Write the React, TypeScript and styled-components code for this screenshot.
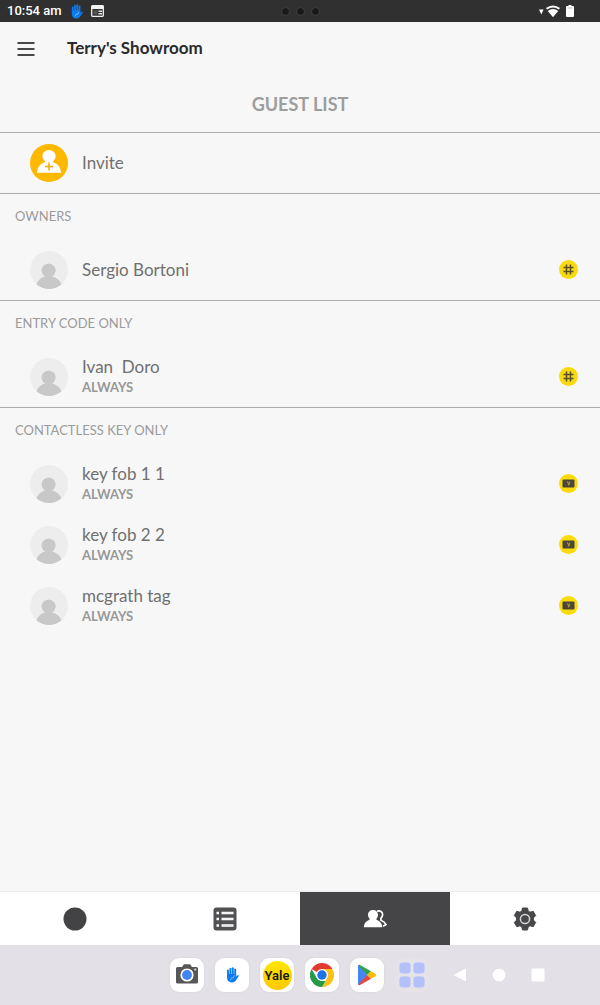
import React from "react";
import styled, { createGlobalStyle } from "styled-components";

const GlobalStyle = createGlobalStyle`
  *, *::before, *::after { box-sizing: border-box; }
  body { margin: 0; background: #f7f7f7; font-family: Lato, "Open Sans", sans-serif; }
  button { font: inherit; color: inherit; border: 0; padding: 0; margin: 0; background: none; cursor: pointer; }
  h1, h2, p, ul { margin: 0; padding: 0; }
  ul { list-style: none; }
  svg { display: block; flex: none; }
`;

const Screen = styled.div`
  min-height: 100vh;
  display: flex;
  flex-direction: column;
`;

const StatusBar = styled.div`
  display: grid;
  grid-template-columns: 1fr auto 1fr;
  align-items: center;
  height: 22px;
  padding: 0 26px 0 7px;
  background: #303030;
  color: #fff;
`;

const StatusLeft = styled.div`
  display: flex;
  align-items: center;
  gap: 7px;
`;

const Clock = styled.time`
  font: 500 13px/22px Roboto, sans-serif;
`;

const Lenses = styled.div`
  display: flex;
  gap: 6px;
  padding-left: 19px;
`;

const Lens = styled.span`
  width: 9px;
  height: 9px;
  border-radius: 50%;
  background: #191919;
  border: 1px solid #414141;
`;

const StatusRight = styled.div`
  display: flex;
  justify-content: flex-end;
  align-items: center;
  gap: 6px;
`;

const Header = styled.header`
  display: flex;
  align-items: center;
  gap: 32px;
  height: 54px;
  padding: 0 17px;
`;

const MenuButton = styled.button`
  display: flex;
`;

const Title = styled.h1`
  padding-bottom: 2px;
  font-size: 17px;
  line-height: 20px;
  font-weight: 700;
  color: #2a2a2a;
`;

const PageHeading = styled.h2`
  padding: 16px 0;
  font-size: 18px;
  line-height: 24px;
  font-weight: 700;
  text-align: center;
  color: #9d9d9d;
`;

const Main = styled.main`
  flex: 1;
`;

const Section = styled.section`
  border-top: 1px solid #acacac;
`;

const SectionTitle = styled.h2`
  padding: 0 15px;
  font-size: 13px;
  line-height: 45px;
  font-weight: 400;
  color: #9b9b9b;
`;

const Row = styled.button<{ $short?: boolean }>`
  display: flex;
  align-items: center;
  width: 100%;
  height: ${(p) => (p.$short ? 60 : 61)}px;
  padding: 0 22px 0 30px;
  gap: 14px;
  text-align: left;
`;

const RowText = styled.span`
  flex: 1;
  display: flex;
  flex-direction: column;
`;

const Name = styled.span`
  font-size: 17px;
  line-height: 22px;
  color: #707070;
  white-space: pre;
`;

const Schedule = styled.span`
  padding-bottom: 2px;
  font-size: 13px;
  line-height: 18px;
  font-weight: 700;
  color: #989898;
`;

const TabBar = styled.nav`
  display: grid;
  grid-template-columns: repeat(4, 1fr);
  height: 53px;
  background: #fff;
  box-shadow: 0 -1px 0 #ececec;
`;

const Tab = styled.button<{ $active?: boolean }>`
  display: flex;
  align-items: center;
  justify-content: center;
  background: ${(p) => (p.$active ? "#454547" : "transparent")};
`;

const Dock = styled.footer`
  display: flex;
  align-items: center;
  justify-content: flex-end;
  height: 60px;
  padding-right: 55px;
  gap: 24px;
  background: #e3e1e7;
`;

const Apps = styled.div`
  display: flex;
  gap: 11px;
`;

const AppButton = styled.button<{ $faint?: boolean }>`
  display: flex;
  align-items: center;
  justify-content: center;
  width: 34px;
  height: 34px;
  border-radius: 9px;
  background: ${(p) => (p.$faint ? "#e5e2e8" : "#fff")};
  box-shadow: 0 0 2px ${(p) => (p.$faint ? "transparent" : "#d0ced4")};
`;

const YaleDisc = styled.span`
  display: flex;
  align-items: center;
  justify-content: center;
  flex: none;
  width: 29px;
  height: 29px;
  border-radius: 50%;
  background: linear-gradient(#ffe600, #ffc800);
  font: 600 13px/29px Roboto, sans-serif;
  color: #161616;
`;

const SystemKeys = styled.div`
  display: flex;
  gap: 25px;
`;

const SystemKey = styled.button`
  display: flex;
`;

const Hand = ({ size }: { size: number }) => (
  <svg width={size} height={size} viewBox="0 0 16 16" fill="none" stroke="#0b7bf2" strokeLinecap="round">
    <path d="M4 8.500V3.500M6.400 8V1.800M8.800 8V1.300M11.200 8.500V2.500" strokeWidth="1.900" />
    <path d="M3.050 7h9.100v2.500l1.400-1.200c.7-.4 1.600.2 1.100.9L11.900 13.300c-.8 1.300-2 2.200-3.900 2.200-3 0-4.950-1.900-4.950-4.700z" fill="#0b7bf2" stroke="none" />
    <path d="M6.600 13l.8-1.900 2.200-.4.700-2" stroke="#a9cffb" strokeWidth=".7" />
  </svg>
);

const NewsIcon = () => (
  <svg width="13" height="12" viewBox="0 0 13 12">
    <rect x=".7" y=".7" width="11.600" height="10.600" rx=".8" fill="#303030" stroke="#f2f2f2" strokeWidth="1.300" />
    <path d="M.5 1h12v3H.5z" fill="#f2f2f2" />
    <path d="M2.500 5.500h4v4h-4z" fill="#555" />
    <path d="M7.500 5.500h3.500v1.500H7.500zM7.500 8h3.500v1.500H7.500z" fill="#e2e2e2" />
  </svg>
);

const Signal = () => (
  <svg width="21" height="14" viewBox="0 0 21 14" fill="#fff">
    <path d="M0 5.500h4.600L2.300 10.500z" />
    <path d="M14 13.300L8.800 7a8 8 0 0 1 10.400 0z" />
    <path d="M7.600 4.700a10 10 0 0 1 12.800 0" fill="none" stroke="#fff" strokeWidth="2" />
  </svg>
);

const Battery = () => (
  <svg width="8" height="12" viewBox="0 0 8 12" fill="#fff">
    <path d="M2.500 0h3v1H7a1 1 0 0 1 1 1v9a1 1 0 0 1-1 1H1a1 1 0 0 1-1-1V2a1 1 0 0 1 1-1h1.500z" />
    <path d="M1.500 2.500h5v1h-5z" fill="#bbb" />
  </svg>
);

const MenuIcon = () => (
  <svg width="18" height="14" viewBox="0 0 18 14" stroke="#484848" strokeWidth="1.800">
    <path d="M.5 1h17M.5 7h17M.5 13h17" />
  </svg>
);

const InviteAvatar = () => (
  <svg width="38" height="38" viewBox="0 0 38 38">
    <circle cx="19" cy="19" r="19" fill="#ffb800" />
    <path d="M7 28.700c.4-6 3.100-8.800 7.700-10.500.4-.2.500-.6.200-1-1.500-1.400-2.500-3-2.500-4.900a6.600 6.300 0 0 1 13.200 0c0 1.900-1 3.500-2.500 4.900-.3.400-.2.800.2 1 4.600 1.700 7.300 4.500 7.700 10.500z" fill="#fff" />
    <path d="M19 18.500v8M15 22.500h8" stroke="#f5a800" strokeWidth="1.500" />
  </svg>
);

const GuestAvatar = () => (
  <svg width="38" height="38" viewBox="0 0 38 38">
    <circle cx="19" cy="19" r="19" fill="#ededed" />
    <path d="M6.500 33.300c2-4.900 5.500-7 8.800-7.700a7 7 0 1 1 6.600 0c3.300.7 7.200 2.800 9.600 7.700a19 19 0 0 1-25 0z" fill="#c8c8c8" />
  </svg>
);

const CodeBadge = () => (
  <svg width="19" height="19" viewBox="0 0 19 19" role="img" aria-label="Entry code">
    <circle cx="9.500" cy="9.500" r="9.500" fill="#f9d90f" />
    <path d="M7.500 4.500v10M11.500 4.500v10M4.500 7.500h10M4.500 11.500h10" stroke="#5a5030" strokeWidth="1.500" />
  </svg>
);

const KeyBadge = () => (
  <svg width="19" height="19" viewBox="0 0 19 19" role="img" aria-label="Contactless key">
    <circle cx="9.500" cy="9.500" r="9.500" fill="#fbdc0a" />
    <rect x="3.500" y="5.500" width="12" height="8" rx="1" fill="#4b463b" />
    <path d="M8 7.500l1.500 2v2M10.500 7.500v3" stroke="#a8923a" strokeWidth="1.200" fill="none" />
  </svg>
);

const ListIcon = () => (
  <svg width="24" height="24" viewBox="0 0 24 24">
    <rect x=".5" y=".5" width="23" height="23" rx="3" fill="#515153" />
    <path d="M3.500 6h2.500M3.500 12h2.500M3.500 18.500h2.500M8.500 6h12M8.500 12h12M8.500 18.500h12" stroke="#fff" strokeWidth="2.600" />
    <path d="M9.500 6h10M9.500 12h10M9.500 18.500h10" stroke="#ddd" strokeWidth=".6" />
  </svg>
);

const GuestsIcon = () => (
  <svg width="24" height="20" viewBox="0 0 24 20">
    <path d="M14 2.400c3-1.300 5.800.6 5.600 3.500-.1 1.500-.8 2.500-1.700 3.400v1.900c2.300.8 4.200 2.400 5.100 4.400l-3 1.600" fill="none" stroke="#fff" strokeWidth="1.700" />
    <path d="M.8 18.200c.2-3.900 2.300-6.200 5.600-7.500.4-.2.400-.6.200-.9A5.300 5.300 0 0 1 5 6c0-3 2.200-5 5-5s5 2 5 5c0 1.500-.6 2.800-1.600 3.800-.2.300-.2.700.2.900 3.400 1.300 5.500 3.600 5.700 7.500z" fill="#fff" />
  </svg>
);

const GearIcon = () => (
  <svg width="24" height="24" viewBox="0 0 24 24">
    <path d="M9.500 1h5l.7 3.100 1.900 1.100 3.100-.9 2.500 4.300-2.300 2.300v2.200l2.300 2.300-2.500 4.300-3.100-.9-1.900 1.100-.7 3.100h-5l-.7-3.100-1.900-1.100-3.100.9-2.500-4.300 2.300-2.300v-2.200L1.300 8.600l2.500-4.300 3.100.9 1.900-1.100z" fill="#48484a" stroke="#48484a" strokeLinejoin="round" />
    <circle cx="12" cy="12" r="4.600" fill="none" stroke="#d5d5d5" strokeWidth="1.500" />
  </svg>
);

const CameraIcon = () => (
  <svg width="24" height="24" viewBox="0 0 24 24">
    <path d="M2.500 4H7L9 1.300h6L17 4h4.500A1.500 1.500 0 0 1 23 5.500V19a1.500 1.500 0 0 1-1.500 1.500h-19A1.500 1.500 0 0 1 1 19V5.500A1.500 1.500 0 0 1 2.500 4z" fill="#575757" />
    <circle cx="12" cy="12" r="6.600" fill="#fff" />
    <circle cx="12" cy="12" r="4.900" fill="#4184f3" />
    <circle cx="20.300" cy="6.500" r="1.100" fill="#ddd" />
  </svg>
);

const ChromeIcon = () => (
  <svg width="24" height="24" viewBox="0 0 24 24">
    <path d="M12 12L1.600 6A12 12 0 0 1 22.400 6z" fill="#e23b2e" />
    <path d="M12 6h10.400A12 12 0 0 1 12 24l5.200-9z" fill="#fbc116" />
    <path d="M1.600 6l5.200 9L12 18h3.500L12 24A12 12 0 0 1 1.600 6z" fill="#249b49" />
    <circle cx="12" cy="12" r="6" fill="#fff" />
    <circle cx="12" cy="12" r="4.700" fill="#1a73e8" />
  </svg>
);

const PlayIcon = () => (
  <svg width="20" height="22" viewBox="0 0 20 22" strokeLinejoin="round">
    <path d="M1.500 1.500v19L10 11z" fill="#4285f4" stroke="#4285f4" />
    <path d="M1.200 1.500C1.500.8 2.300.7 3 1.100l11 6.200L10.200 11z" fill="#2ba24c" />
    <path d="M1.200 20.500c.3.700 1.100.8 1.800.4l11-6.200L10.200 11z" fill="#e8453c" />
    <path d="M14 7.300l4.300 2.500c1 .6 1 1.800 0 2.400L14 14.700 10.200 11z" fill="#fbbc04" />
  </svg>
);

const AllAppsIcon = () => (
  <svg width="26" height="26" viewBox="0 0 26 26" fill="#b3c0fa">
    <rect x=".5" y=".5" width="11" height="11" rx="3" />
    <rect x="14.500" y=".5" width="11" height="11" rx="3" />
    <rect x=".5" y="14.500" width="11" height="11" rx="3" />
    <rect x="14.500" y="14.500" width="11" height="11" rx="3" />
  </svg>
);

type Guest = { name: string; schedule?: string };
type Group = { title: string; badge: "code" | "key"; guests: Guest[] };

const groups: Group[] = [
  { title: "OWNERS", badge: "code", guests: [{ name: "Sergio Bortoni" }] },
  { title: "ENTRY CODE ONLY", badge: "code", guests: [{ name: "Ivan  Doro", schedule: "ALWAYS" }] },
  {
    title: "CONTACTLESS KEY ONLY",
    badge: "key",
    guests: [
      { name: "key fob 1 1", schedule: "ALWAYS" },
      { name: "key fob 2 2", schedule: "ALWAYS" },
      { name: "mcgrath tag", schedule: "ALWAYS" },
    ],
  },
];

export default function App() {
  return (
    <Screen>
      <GlobalStyle />
      <StatusBar>
        <StatusLeft>
          <Clock>10:54 am</Clock>
          <Hand size={15} />
          <NewsIcon />
        </StatusLeft>
        <Lenses>
          <Lens />
          <Lens />
          <Lens />
        </Lenses>
        <StatusRight>
          <Signal />
          <Battery />
        </StatusRight>
      </StatusBar>
      <Header>
        <MenuButton aria-label="Menu">
          <MenuIcon />
        </MenuButton>
        <Title>Terry's Showroom</Title>
      </Header>
      <Main>
        <PageHeading>GUEST LIST</PageHeading>
        <Section>
          <Row $short>
            <InviteAvatar />
            <RowText>
              <Name>Invite</Name>
            </RowText>
          </Row>
        </Section>
        {groups.map((group) => (
          <Section key={group.title}>
            <SectionTitle>{group.title}</SectionTitle>
            <ul>
              {group.guests.map((guest) => (
                <li key={guest.name}>
                  <Row>
                    <GuestAvatar />
                    <RowText>
                      <Name>{guest.name}</Name>
                      {guest.schedule && <Schedule>{guest.schedule}</Schedule>}
                    </RowText>
                    {group.badge === "code" ? <CodeBadge /> : <KeyBadge />}
                  </Row>
                </li>
              ))}
            </ul>
          </Section>
        ))}
      </Main>
      <TabBar>
        <Tab aria-label="Lock">
          <svg width="24" height="24" viewBox="0 0 24 24">
            <circle cx="12" cy="12" r="11.500" fill="#434345" />
          </svg>
        </Tab>
        <Tab aria-label="Activity">
          <ListIcon />
        </Tab>
        <Tab aria-label="Guests" $active>
          <GuestsIcon />
        </Tab>
        <Tab aria-label="Settings">
          <GearIcon />
        </Tab>
      </TabBar>
      <Dock>
        <Apps>
          <AppButton aria-label="Camera">
            <CameraIcon />
          </AppButton>
          <AppButton aria-label="Hand">
            <Hand size={16} />
          </AppButton>
          <AppButton>
            <YaleDisc>Yale</YaleDisc>
          </AppButton>
          <AppButton aria-label="Chrome">
            <ChromeIcon />
          </AppButton>
          <AppButton aria-label="Play Store">
            <PlayIcon />
          </AppButton>
          <AppButton aria-label="All apps" $faint>
            <AllAppsIcon />
          </AppButton>
        </Apps>
        <SystemKeys>
          <SystemKey aria-label="Back">
            <svg width="14" height="14" viewBox="0 0 14 14">
              <path d="M13 .5v13L.5 7z" fill="#fff" />
            </svg>
          </SystemKey>
          <SystemKey aria-label="Home">
            <svg width="14" height="14" viewBox="0 0 14 14">
              <circle cx="7" cy="7" r="6.300" fill="#fff" />
            </svg>
          </SystemKey>
          <SystemKey aria-label="Recent apps">
            <svg width="14" height="14" viewBox="0 0 14 14">
              <rect x=".5" y=".5" width="13" height="13" rx="1" fill="#fff" />
            </svg>
          </SystemKey>
        </SystemKeys>
      </Dock>
    </Screen>
  );
}
